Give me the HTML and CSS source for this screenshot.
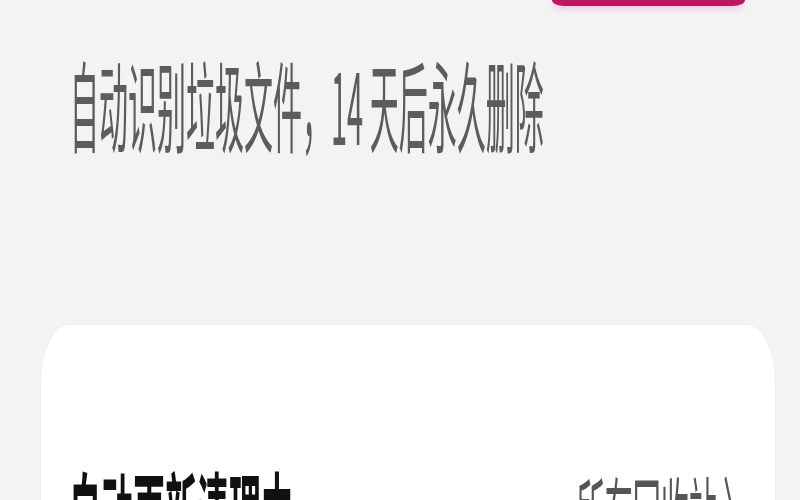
FILE: index.html
```html
<!DOCTYPE html>
<html lang="zh-CN">
<head>
<meta charset="utf-8">
<link rel="stylesheet" href="styles.css">
</head>
<body>
<div class="page">
  <div class="topbar"><div class="pink-btn"></div></div>
  <div class="subtitle">自动识别垃圾文件，14 天后永久删除</div>
  <div class="card">
    <div class="row">
      <div class="row-title">自动更新清理中</div>
      <div class="row-link">所有回收站 〉</div>
    </div>
  </div>
</div>
</body>
</html>
```
FILE: styles.css
```css
html, body {
  margin: 0;
  padding: 0;
}
body {
  background: #f2f3f5;
  font-family: "Noto Sans CJK SC", "Noto Sans", sans-serif;
  width: 800px;
  height: 500px;
  overflow: hidden;
}
.page {
  display: flex;
  flex-direction: column;
}
.topbar {
  display: flex;
  justify-content: flex-end;
  padding-right: 55px;
}
.pink-btn {
  width: 193px;
  height: 6px;
  background: #c0165f;
  border-radius: 0 0 12px 12px / 0 0 6px 6px;
  box-shadow: 0 3px 6px rgba(250, 130, 210, 0.45);
}
.subtitle {
  margin: 47px 0 0 70px;
  height: 29px;
  line-height: 29px;
  font-size: 29px;
  font-weight: 400;
  color: #5c5c5c;
  white-space: nowrap;
  transform: scaleY(3.4);
  transform-origin: 0 0;
}
.card {
  margin: 243px 25px 0 41px;
  height: 320px;
  background: #ffffff;
  border-radius: 28px / 60px;
  box-shadow: 0 0 3px rgba(0, 0, 0, 0.03);
  padding: 138px 24px 0 28px;
}
.row {
  display: flex;
  justify-content: space-between;
  align-items: flex-start;
}
.row-title {
  font-size: 32px;
  line-height: 32px;
  height: 32px;
  font-weight: 700;
  color: #111;
  white-space: nowrap;
  transform: scaleY(3.1);
  transform-origin: 0 0;
}
.row-link {
  font-size: 28px;
  line-height: 32px;
  height: 32px;
  color: #555;
  white-space: nowrap;
  transform: scaleY(3.1);
  transform-origin: 0 0;
}
```
